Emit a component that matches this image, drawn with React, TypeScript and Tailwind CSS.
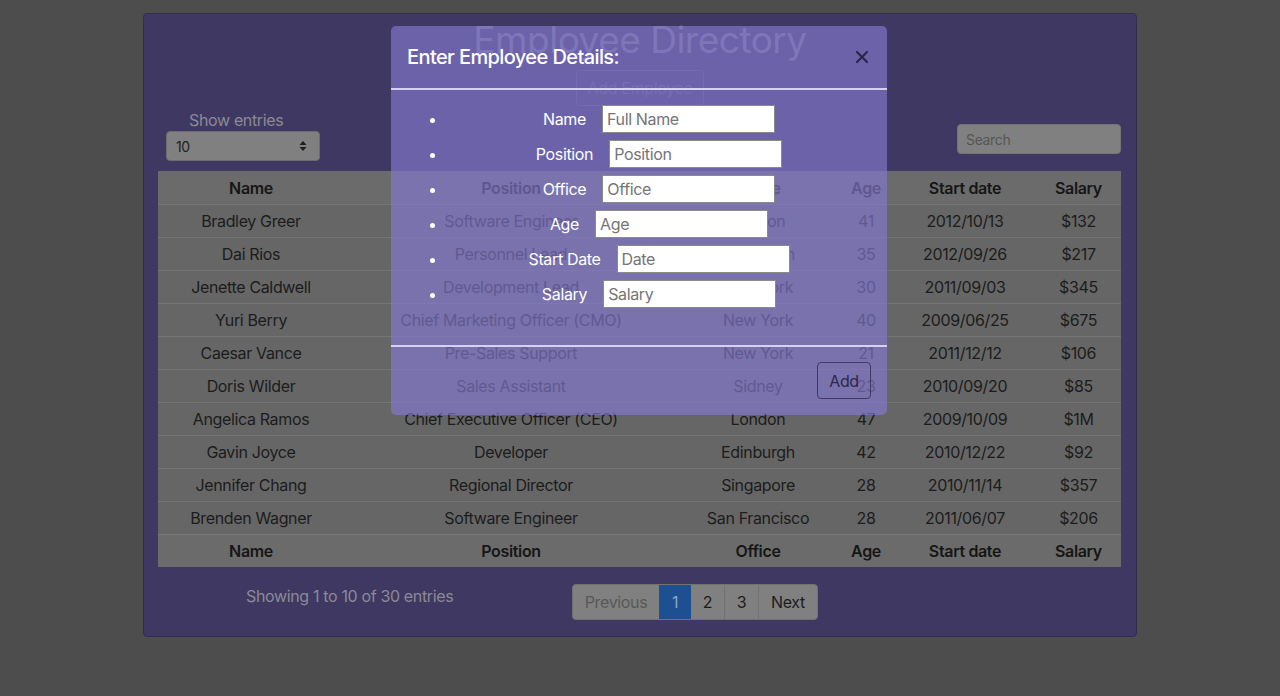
import React from "react";

const rows = [
  ["Bradley Greer", "Software Engineer", "London", "41", "2012/10/13", "$132"],
  ["Dai Rios", "Personnel Lead", "Edinburgh", "35", "2012/09/26", "$217"],
  ["Jenette Caldwell", "Development Lead", "New York", "30", "2011/09/03", "$345"],
  ["Yuri Berry", "Chief Marketing Officer (CMO)", "New York", "40", "2009/06/25", "$675"],
  ["Caesar Vance", "Pre-Sales Support", "New York", "21", "2011/12/12", "$106"],
  ["Doris Wilder", "Sales Assistant", "Sidney", "23", "2010/09/20", "$85"],
  ["Angelica Ramos", "Chief Executive Officer (CEO)", "London", "47", "2009/10/09", "$1M"],
  ["Gavin Joyce", "Developer", "Edinburgh", "42", "2010/12/22", "$92"],
  ["Jennifer Chang", "Regional Director", "Singapore", "28", "2010/11/14", "$357"],
  ["Brenden Wagner", "Software Engineer", "San Francisco", "28", "2011/06/07", "$206"],
];

const heads = ["Name", "Position", "Office", "Age", "Start date", "Salary"];

const gridCols = "grid grid-cols-[186px_334px_160px_56px_142px_85px]";

function HeadRow({ top }: { top?: boolean }) {
  return (
    <div
      className={`${gridCols} h-[33px] items-center bg-[#6b6b6b] text-[#161616] font-semibold ${
        top ? "" : "border-t border-[#787878]"
      }`}
    >
      {heads.map((h) => (
        <div key={h} className="text-center">
          {h}
        </div>
      ))}
    </div>
  );
}

const fields = [
  ["Name", "Full Name"],
  ["Position", "Position"],
  ["Office", "Office"],
  ["Age", "Age"],
  ["Start Date", "Date"],
  ["Salary", "Salary"],
];

export default function App() {
  return (
    <div
      className="relative w-full h-[696px] overflow-hidden bg-[#4d4d4d] pt-[13px] text-[16px] tracking-[-0.35px]"
      style={{ fontFamily: "Inter, 'Noto Sans', sans-serif" }}
    >
      {/* Page */}
      <div className="ml-[143px] w-[994px] h-[624px] rounded-[4px] border border-[#322c50] bg-[#3f3862]">
        <div className="pt-[3px] text-center text-[37px] leading-[46px] text-[#74738a] tracking-[-0.5px]">
          Employee Directory
        </div>
        <div className="mt-[7px] flex justify-center">
          <div className="h-[36px] w-[128px] rounded-[4px] border border-[#5a5478] flex items-center justify-center text-[#5f5a7c]">
            Add Employee
          </div>
        </div>
        <div className="mt-[3px] flex items-end justify-between">
          <div>
            <div className="ml-[45px] leading-[22px] text-[#8b8a96]">Show entries</div>
            <div className="ml-[22px] w-[154px] h-[30px] rounded-[4px] border border-[#6c6c6c] bg-[#808080] flex items-center justify-between pl-[9px] pr-[12px] text-[14px] text-[#1f1f1f]">
              <span>10</span>
              <svg width="8" height="12" viewBox="0 0 8 12">
                <path d="M4 1 L7.5 5 L0.5 5 Z" fill="#1f1f1f" />
                <path d="M4 11 L7.5 7 L0.5 7 Z" fill="#1f1f1f" />
              </svg>
            </div>
          </div>
          <div className="mr-[15px] mb-[7px] w-[164px] h-[30px] rounded-[4px] border border-[#747474] bg-[#808080] flex items-center pl-[8px] text-[14px] text-[#555555]">
            Search
          </div>
        </div>
        <div className="mt-[10px] ml-[14px] w-[963px] text-[#1c1c1c]">
          <HeadRow top />
          {rows.map((r) => (
            <div
              key={r[0]}
              className={`${gridCols} h-[33px] items-center bg-[#666666] border-t border-[#757575]`}
            >
              {r.map((c, i) => (
                <div key={i} className="text-center whitespace-nowrap">
                  {c}
                </div>
              ))}
            </div>
          ))}
          <HeadRow />
        </div>
        <div className="mt-[17px] flex">
          <div className="w-[428px] pl-[102px] leading-[24px] text-[#8b8a96]">
            Showing 1 to 10 of 30 entries
          </div>
          <div className="flex h-[36px] rounded-[4px] border border-[#727272] bg-[#808080] overflow-hidden">
            <div className="w-[86px] flex items-center justify-center text-[#585858]">Previous</div>
            <div className="w-[32px] flex items-center justify-center bg-[#1d4f91] text-[#8ea6cc]">1</div>
            <div className="w-[34px] flex items-center justify-center border-r border-[#727272] text-[#1c1c1c]">2</div>
            <div className="w-[34px] flex items-center justify-center border-r border-[#727272] text-[#1c1c1c]">3</div>
            <div className="w-[58px] flex items-center justify-center text-[#1c1c1c]">Next</div>
          </div>
        </div>
      </div>

      {/* Modal */}
      <div className="absolute left-[391px] top-[26px] w-[496px] h-[389px] rounded-[5px] bg-[rgba(132,120,208,0.66)]">
        <div className="h-[62px] flex items-center justify-between pl-[16px] pr-[16px]">
          <div className="text-[20px] font-medium text-white tracking-[-0.6px]">Enter Employee Details:</div>
          <svg width="14" height="14" viewBox="0 0 14 14" className="mr-[2px]">
            <path d="M2 2 L12 12 M12 2 L2 12" stroke="#2b2848" strokeWidth="2.2" strokeLinecap="round" />
          </svg>
        </div>
        <div className="h-[2px] bg-[#d6d0f2]" />
        <div className="px-[16px] pt-[12px] pb-[33px]">
          <ul className="list-disc pl-[40px] text-white marker:text-white">
            {fields.map(([label, ph]) => (
              <li key={label} className="h-[35px] leading-[35px] text-center">
                <span className="align-top">{label}</span>
                <span className="inline-block w-[16px]" />
                <span className="inline-block align-top mt-[3px] w-[173px] h-[28px] bg-white border border-[#8a8a8a] text-left pl-[4px] leading-[26px] text-[#757575]">
                  {ph}
                </span>
              </li>
            ))}
          </ul>
        </div>
        <div className="h-[2px] bg-[#d6d0f2]" />
        <div className="flex justify-end pr-[16px] pt-[15px]">
          <div className="w-[54px] h-[37px] rounded-[4px] border border-[#3f3a66] flex items-center justify-center text-[#2b2848]">
            Add
          </div>
        </div>
      </div>
    </div>
  );
}
